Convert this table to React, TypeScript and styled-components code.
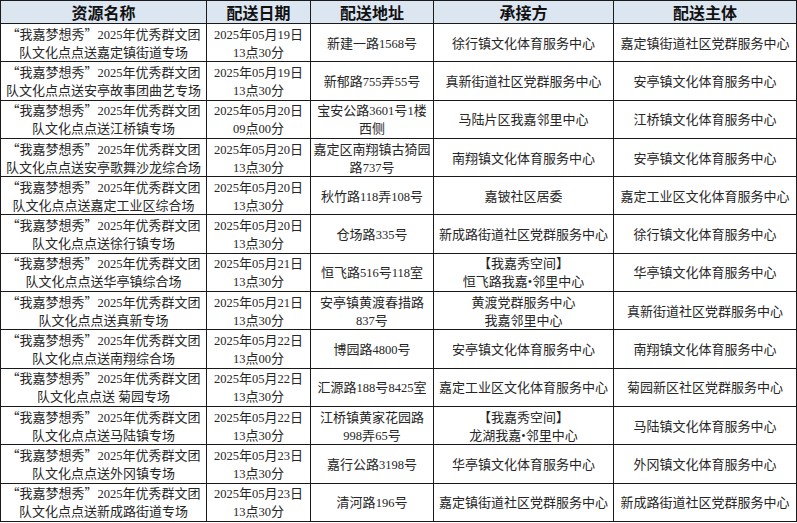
import React from "react";
import styled, { createGlobalStyle } from "styled-components";

const GlobalStyle = createGlobalStyle`
  html, body { margin: 0; padding: 0; background: #ffffff; }
  body { font-family: "Noto Sans CJK SC", "Liberation Sans", sans-serif; }
`;

const Table = styled.table`
  width: 796px;
  border-collapse: collapse;
  table-layout: fixed;
  color: #262626;
`;

const HeadRow = styled.tr`
  height: 23px;
`;

const HeadCell = styled.th`
  height: 22px;
  padding: 0;
  border: 1px solid #1a1a1a;
  background: #dce6f1;
  color: #111111;
  font-family: "Noto Sans CJK SC", sans-serif;
  font-weight: 700;
  font-size: 16px;
  line-height: 20px;
  text-align: center;
  vertical-align: middle;
  overflow: hidden;
`;

const Row = styled.tr`
  height: 38.3px;
`;

const Cell = styled.td`
  height: 37px;
  padding: 0;
  border: 1px solid #1a1a1a;
  font-family: "Noto Sans CJK SC", sans-serif;
  font-size: 13px;
  line-height: 18px;
  text-align: center;
  vertical-align: middle;
  white-space: nowrap;
  overflow: hidden;
`;

const Line = styled.div`
  display: block;
  height: 18px;
  line-height: 18px;
  overflow: visible;
`;

const Num = styled.span`
  font-family: "Liberation Serif", serif;
  font-size: 12.5px;
  line-height: 1;
`;

const cols = [206, 104, 123, 180, 183];
const heads = ["资源名称", "配送日期", "配送地址", "承接方", "配送主体"];

type RowData = {
  name: string;
  date: string;
  time: string;
  addr: string[];
  host: string[];
  owner: string;
};

const rows: RowData[] = [
  { name: "送嘉定镇街道专场", date: "2025年05月19日", time: "13点30分", addr: ["新建一路1568号"], host: ["徐行镇文化体育服务中心"], owner: "嘉定镇街道社区党群服务中心" },
  { name: "送安亭故事团曲艺专场", date: "2025年05月19日", time: "13点30分", addr: ["新郁路755弄55号"], host: ["真新街道社区党群服务中心"], owner: "安亭镇文化体育服务中心" },
  { name: "送江桥镇专场", date: "2025年05月20日", time: "09点00分", addr: ["宝安公路3601号1楼", "西侧"], host: ["马陆片区我嘉邻里中心"], owner: "江桥镇文化体育服务中心" },
  { name: "送安亭歌舞沙龙综合场", date: "2025年05月20日", time: "13点30分", addr: ["嘉定区南翔镇古猗园", "路737号"], host: ["南翔镇文化体育服务中心"], owner: "安亭镇文化体育服务中心" },
  { name: "送嘉定工业区综合场", date: "2025年05月20日", time: "13点30分", addr: ["秋竹路118弄108号"], host: ["嘉铍社区居委"], owner: "嘉定工业区文化体育服务中心" },
  { name: "送徐行镇专场", date: "2025年05月20日", time: "13点30分", addr: ["仓场路335号"], host: ["新成路街道社区党群服务中心"], owner: "徐行镇文化体育服务中心" },
  { name: "送华亭镇综合场", date: "2025年05月21日", time: "13点30分", addr: ["恒飞路516号118室"], host: ["【我嘉秀空间】", "恒飞路我嘉•邻里中心"], owner: "华亭镇文化体育服务中心" },
  { name: "送真新专场", date: "2025年05月21日", time: "13点30分", addr: ["安亭镇黄渡春措路", "837号"], host: ["黄渡党群服务中心", "我嘉邻里中心"], owner: "真新街道社区党群服务中心" },
  { name: "送南翔综合场", date: "2025年05月22日", time: "13点00分", addr: ["博园路4800号"], host: ["安亭镇文化体育服务中心"], owner: "南翔镇文化体育服务中心" },
  { name: "送 菊园专场", date: "2025年05月22日", time: "13点30分", addr: ["汇源路188号8425室"], host: ["嘉定工业区文化体育服务中心"], owner: "菊园新区社区党群服务中心" },
  { name: "送马陆镇专场", date: "2025年05月22日", time: "13点30分", addr: ["江桥镇黄家花园路", "998弄65号"], host: ["【我嘉秀空间】", "龙湖我嘉•邻里中心"], owner: "马陆镇文化体育服务中心" },
  { name: "送外冈镇专场", date: "2025年05月23日", time: "13点30分", addr: ["嘉行公路3198号"], host: ["华亭镇文化体育服务中心"], owner: "外冈镇文化体育服务中心" },
  { name: "送新成路街道专场", date: "2025年05月23日", time: "13点30分", addr: ["清河路196号"], host: ["嘉定镇街道社区党群服务中心"], owner: "新成路街道社区党群服务中心" },
];

function Text({ value }: { value: string }) {
  const parts = value.split(/([0-9•]+)/);
  return (
    <>
      {parts.map((p, i) =>
        /^[0-9•]+$/.test(p) ? <Num key={i}>{p}</Num> : <React.Fragment key={i}>{p}</React.Fragment>
      )}
    </>
  );
}

function Lines({ items }: { items: string[] }) {
  return (
    <>
      {items.map((t, i) => (
        <Line key={i}>
          <Text value={t} />
        </Line>
      ))}
    </>
  );
}

export default function App() {
  return (
    <>
      <GlobalStyle />
      <Table>
        <colgroup>
          {cols.map((w, i) => (
            <col key={i} style={{ width: w }} />
          ))}
        </colgroup>
        <thead>
          <HeadRow>
            {heads.map((h) => (
              <HeadCell key={h}>{h}</HeadCell>
            ))}
          </HeadRow>
        </thead>
        <tbody>
          {rows.map((r, i) => (
            <Row key={i}>
              <Cell>
                <Lines items={["“我嘉梦想秀”2025年优秀群文团", "队文化点点" + r.name]} />
              </Cell>
              <Cell>
                <Lines items={[r.date, r.time]} />
              </Cell>
              <Cell>
                <Lines items={r.addr} />
              </Cell>
              <Cell>
                <Lines items={r.host} />
              </Cell>
              <Cell>
                <Lines items={[r.owner]} />
              </Cell>
            </Row>
          ))}
        </tbody>
      </Table>
    </>
  );
}
